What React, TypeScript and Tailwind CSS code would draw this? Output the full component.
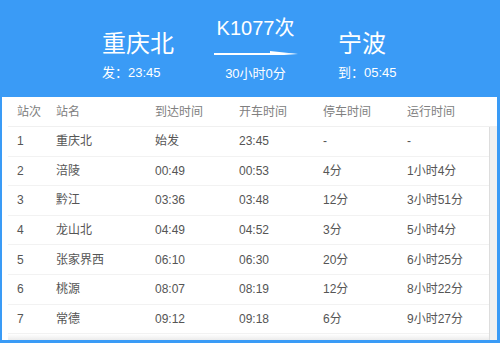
import React from "react";

const rows = [
  ["1", "重庆北", "始发", "23:45", "-", "-"],
  ["2", "涪陵", "00:49", "00:53", "4分", "1小时4分"],
  ["3", "黔江", "03:36", "03:48", "12分", "3小时51分"],
  ["4", "龙山北", "04:49", "04:52", "3分", "5小时4分"],
  ["5", "张家界西", "06:10", "06:30", "20分", "6小时25分"],
  ["6", "桃源", "08:07", "08:19", "12分", "8小时22分"],
  ["7", "常德", "09:12", "09:18", "6分", "9小时27分"],
];

const headers = ["站次", "站名", "到达时间", "开车时间", "停车时间", "运行时间"];

export default function App() {
  return (
    <div
      className="w-[500px] h-[343px] bg-[#3a9bf6] flex flex-col overflow-hidden"
      style={{ fontFamily: '"Liberation Sans", "Noto Sans CJK SC", sans-serif' }}
    >
      {/* Top info */}
      <div className="h-[97px] flex pl-[102px] text-white shrink-0">
        <div className="w-[112px] flex flex-col pt-[32px]">
          <div className="text-[24px] leading-[24px]">重庆北</div>
          <div className="text-[13px] leading-[13px] mt-[10px]">发：23:45</div>
        </div>
        <div className="w-[83px] flex flex-col items-center pt-[17px]">
          <div className="text-[20px] leading-[22px] whitespace-nowrap">K1077次</div>
          <svg width="84" height="6" viewBox="0 0 84 6" className="mt-[11px]">
            <polygon points="0,3 70,3 84,4 70,5 0,5" fill="#ffffff" />
            <polygon points="56,1 84,4 56,3.2" fill="#ffffff" />
          </svg>
          <div className="text-[13px] leading-[13px] mt-[11px] whitespace-nowrap">30小时0分</div>
        </div>
        <div className="ml-[41px] flex flex-col pt-[32px]">
          <div className="text-[24px] leading-[24px]">宁波</div>
          <div className="text-[13px] leading-[13px] mt-[10px]">到：05:45</div>
        </div>
      </div>

      {/* Panel */}
      <div className="ml-[2px] mr-[3px] h-[243px] bg-white flex flex-col shrink-0">
        <div className="h-[30px] pt-[1px] ml-[6px] pl-[9px] grid grid-cols-[39px_99px_84px_84px_84px_1fr] items-center border-b border-[#f0f0f0] text-[12px] text-[#808080] shrink-0">
          {headers.map((h) => (
            <div key={h}>{h}</div>
          ))}
        </div>
        <div className="flex flex-1 min-h-0">
          <div className="flex-1 flex flex-col ml-[6px]">
            {rows.map((r) => (
              <div
                key={r[0]}
                className="h-[29.6px] pl-[9px] grid grid-cols-[39px_99px_84px_84px_84px_1fr] items-center border-b border-[#f2f2f2] text-[12px] text-[#555555] shrink-0"
              >
                {r.map((c, i) => (
                  <div key={i} className="whitespace-nowrap">
                    {c}
                  </div>
                ))}
              </div>
            ))}
            <div className="flex-1 bg-gradient-to-b from-white to-[#ececec]" />
          </div>
          <div className="w-[8px] bg-[#f1f1f1] border-l border-[#dddddd]" />
        </div>
      </div>
    </div>
  );
}
